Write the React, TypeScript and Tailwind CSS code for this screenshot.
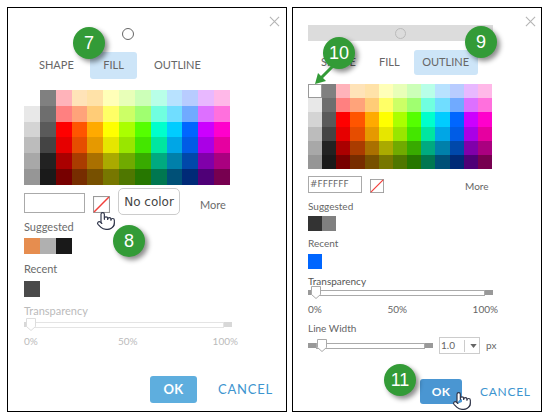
import { Pointer } from 'lucide-react'

const PALETTE = [
  ['transparent', '#808080', '#ffb3ba', '#ffe3b8', '#ffe2a8', '#ffffb8', '#e8ffb8', '#ccffb8', '#b8ffe8', '#b8e2ff', '#b8ccff', '#e8b8ff', '#ffb8e8'],
  ['#e8e8e8', '#6e6e6e', '#ff8080', '#ffa37a', '#ffcc77', '#ffff66', '#ccff66', '#a0ff70', '#70ffdf', '#70ddff', '#70aaff', '#dd70ff', '#ff70dd'],
  ['#d4d4d4', '#5a5a5a', '#ff0000', '#ff5500', '#ffaa00', '#ffff00', '#aaff00', '#55ff00', '#00ffcc', '#00ccff', '#0066ff', '#cc00ff', '#ff00cc'],
  ['#bcbcbc', '#444444', '#e60000', '#e64d00', '#e69900', '#e6e600', '#99e600', '#44e600', '#00e6a0', '#00a6e6', '#005ce6', '#aa00e6', '#e600a0'],
  ['#a8a8a8', '#222222', '#aa0000', '#aa3c00', '#aa7000', '#aaaa00', '#70aa00', '#38aa00', '#00aa80', '#0080aa', '#0048aa', '#8000aa', '#aa0080'],
  ['#969696', '#1a1a1a', '#770000', '#772d00', '#775000', '#777700', '#4f7700', '#267700', '#007750', '#005077', '#002a77', '#4f0077', '#770050'],
]

function Palette({ className, selectFirst }: { className: string; selectFirst?: boolean }) {
  return (
    <div className={`grid grid-cols-13 grid-rows-6 ${className}`}>
      {PALETTE.flat().map((color, i) => (
        <div
          key={i}
          className={selectFirst && i === 0 ? 'border border-[#999] bg-white' : ''}
          style={selectFirst && i === 0 ? undefined : { backgroundColor: color }}
        />
      ))}
    </div>
  )
}

function CloseIcon({ className }: { className: string }) {
  return (
    <svg viewBox="0 0 12 12" className={`absolute ${className}`} fill="none" stroke="#b5b5b5" strokeWidth="1.2">
      <path d="M1 1l10 10M11 1L1 11" />
    </svg>
  )
}

function NoColor({ className }: { className: string }) {
  return (
    <svg viewBox="0 0 16 16" preserveAspectRatio="none" className={className}>
      <rect x="0.5" y="0.5" width="15" height="15" fill="#fff" stroke="#9a9a9a" />
      <path d="M1 15L15 1" stroke="#f2403c" strokeWidth="1.4" />
    </svg>
  )
}

function Badge({ n, className }: { n: number; className: string }) {
  return (
    <div
      className={`absolute flex h-8 w-8 items-center justify-center rounded-full bg-[#339b37] font-['Liberation_Sans',sans-serif] text-[18px] text-white shadow-[3px_3px_5px_rgba(0,0,0,0.45)] ${className}`}
    >
      {n}
    </div>
  )
}

function Slider({ trackClass, thumbClass, dark }: { trackClass: string; thumbClass: string; dark?: boolean }) {
  const end = dark ? 'bg-[#999]' : 'bg-[#d8d8d8]'
  return (
    <div className={`relative flex h-[7px] items-center ${trackClass}`}>
      <div className={`h-[5px] w-2 ${end}`} />
      <div className={`h-[6px] flex-1 border ${dark ? 'border-[#aaa]' : 'border-[#e4e4e4]'} bg-white`} />
      <div className={`h-[5px] w-2 ${end}`} />
      <svg viewBox="0 0 10 13" className={`absolute -top-[3px] h-[13px] w-[10px] ${thumbClass}`}>
        <path d="M.5.5h9v8L5 12.5.5 8.5z" fill="#fff" stroke={dark ? '#aaa' : '#ddd'} />
      </svg>
    </div>
  )
}

function Hand({ className }: { className: string }) {
  return <Pointer className={`absolute ${className}`} size={20} strokeWidth={1.4} color="#2d3348" fill="#fff" />
}

function LeftPanel() {
  return (
    <div className="relative h-[405px] w-[280px] shrink-0 border-[1.5px] border-black bg-white pl-[16px] pt-[20px] text-[#6b6b6b]">
      <CloseIcon className="right-[6px] top-[8px] h-[11px] w-[11px]" />
      <div className="ml-[98px] h-[12px] w-[12px] rounded-full border-[1.5px] border-[#666]" />
      <div className="ml-[15px] mt-[12px] flex h-[27px] items-center text-[11px] text-[#666]">
        <span className="w-[33px]">SHAPE</span>
        <span className="ml-[18px] flex h-[27px] w-[47px] items-center justify-center rounded-[3px] bg-[#cde5f8]">FILL</span>
        <span className="ml-[17px]">OUTLINE</span>
      </div>
      <Palette className="mt-[11px] h-[95px] w-[206px]" />
      <div className="mt-[8px] flex h-[20px] items-center">
        <div className="h-[20px] w-[61px] border border-[#aaa]" />
        <NoColor className="ml-[8px] mt-[2px] h-[17px] w-[17px]" />
        <div className="ml-[8px] -mt-[3px] flex h-[27px] w-[62px] shrink-0 items-center justify-center rounded-[5px] border border-[#ccc] bg-white font-['DejaVu_Sans',sans-serif] text-[12px] text-[#444]">
          No color
        </div>
        <span className="ml-[20px] mt-[5px] text-[11px]">More</span>
      </div>
      <p className="mt-[7px] text-[11px] leading-[14px]">Suggested</p>
      <div className="mt-[4px] flex h-[16px] w-[48px]">
        <div className="flex-1 bg-[#e68d4f]" />
        <div className="flex-1 bg-[#b0b0b0]" />
        <div className="flex-1 bg-[#191919]" />
      </div>
      <p className="mt-[8px] text-[11px] leading-[14px]">Recent</p>
      <div className="mt-[5px] h-[16px] w-[16px] bg-[#4a4a4a]" />
      <p className="mt-[7px] text-[11px] leading-[14px] text-[#bbb]">Transparency</p>
      <Slider trackClass="mt-[3px] w-[208px]" thumbClass="left-[2px]" />
      <div className="mt-[7px] flex w-[214px] justify-between text-[10px] leading-[12px] text-[#bbb]">
        <span>0%</span>
        <span className="ml-[5px]">50%</span>
        <span>100%</span>
      </div>
      <div className="mt-[29px] flex items-center">
        <button className="ml-[126px] h-[27px] w-[47px] rounded-[3px] bg-[#5eaede] text-[13px] font-bold tracking-wide text-white">OK</button>
        <span className="ml-[21px] text-[13px] tracking-[0.06em] text-[#3d95cf]">CANCEL</span>
      </div>
    </div>
  )
}

function RightPanel() {
  return (
    <div className="relative ml-[5px] h-[405px] w-[250px] shrink-0 border-[1.5px] border-black bg-white pl-[15px] pt-[17px] text-[#666]">
      <CloseIcon className="right-[5px] top-[8px] h-[11px] w-[11px]" />
      <div className="flex h-[16px] w-[185px] items-center justify-center bg-[#dcdcdc]">
        <div className="h-[11px] w-[11px] rounded-full border border-[#bbb]" />
      </div>
      <div className="ml-[13px] mt-[9px] flex h-[25px] items-center text-[11px]">
        <span className="w-[33px]">SHAPE</span>
        <span className="ml-[25px]">FILL</span>
        <span className="ml-[14px] flex h-[25px] w-[64px] items-center justify-center rounded-[3px] bg-[#cde5f8]">OUTLINE</span>
      </div>
      <Palette className="mt-[9px] h-[85px] w-[184px]" selectFirst />
      <div className="mt-[7px] flex h-[17px] items-center">
        <div className="flex h-[17px] w-[54px] items-center border border-[#aaa] pl-[1px] font-['DejaVu_Sans',sans-serif] text-[9px] leading-none">#FFFFFF</div>
        <NoColor className="ml-[8px] mt-[3px] h-[14px] w-[14px]" />
        <span className="ml-[81px] mt-[3px] text-[10px]">More</span>
      </div>
      <p className="mt-[7px] text-[10px] leading-[13px]">Suggested</p>
      <div className="mt-[3px] flex h-[15px] w-[28px]">
        <div className="flex-1 bg-[#333]" />
        <div className="flex-1 bg-[#808080]" />
      </div>
      <p className="mt-[6px] text-[10px] leading-[13px]">Recent</p>
      <div className="mt-[4px] h-[15px] w-[14px] bg-[#0066ff]" />
      <p className="mt-[6px] text-[10px] leading-[13px] text-[#555]">Transparency</p>
      <Slider dark trackClass="mt-[1px] w-[185px]" thumbClass="left-[3px]" />
      <div className="mt-[7px] flex w-[190px] justify-between text-[10px] leading-[12px]">
        <span>0%</span>
        <span>50%</span>
        <span>100%</span>
      </div>
      <p className="mt-[7px] text-[10px] leading-[13px]">Line Width</p>
      <div className="mt-[2px] flex h-[17px] items-center">
        <Slider dark trackClass="w-[125px]" thumbClass="left-[9px]" />
        <div className="ml-[6px] flex h-[17px] w-[41px] items-center border border-[#ccc] pl-[1px] text-[10px]">
          <span className="w-[23px]">1.0</span>
          <span className="h-[12px] border-l border-[#ccc]" />
          <svg viewBox="0 0 8 5" className="ml-[5px] h-[4px] w-[7px]"><path d="M0 0h8L4 5z" fill="#666" /></svg>
        </div>
        <span className="ml-[6px] text-[10px]">px</span>
      </div>
      <div className="mt-[25px] flex items-center">
        <button className="ml-[112px] h-[25px] w-[42px] rounded-[3px] bg-[#4a96d2] text-[12px] font-bold tracking-wide text-white">OK</button>
        <span className="ml-[18px] text-[12px] tracking-[0.06em] text-[#3d95cf]">CANCEL</span>
      </div>
    </div>
  )
}

export default function App() {
  return (
    <div className="relative flex h-[418px] w-[548px] overflow-hidden bg-white pl-[7px] pt-[7px] font-['Lato',sans-serif]">
      <LeftPanel />
      <RightPanel />
      <Badge n={7} className="left-[73px] top-[27px]" />
      <Badge n={8} className="left-[113px] top-[225px]" />
      <Badge n={9} className="left-[465px] top-[26px]" />
      <Badge n={10} className="left-[323px] top-[37px]" />
      <Badge n={11} className="left-[384px] top-[364px]" />
      <svg viewBox="0 0 22 24" className="absolute left-[314px] top-[62px] h-[24px] w-[22px]">
        <path d="M20 3L7 16" fill="none" stroke="#339b37" strokeWidth="3" />
        <path d="M1 22l3-11 8 8z" fill="#339b37" />
      </svg>
      <Hand className="left-[96px] top-[211px]" />
      <Hand className="left-[452px] top-[391px]" />
    </div>
  )
}
